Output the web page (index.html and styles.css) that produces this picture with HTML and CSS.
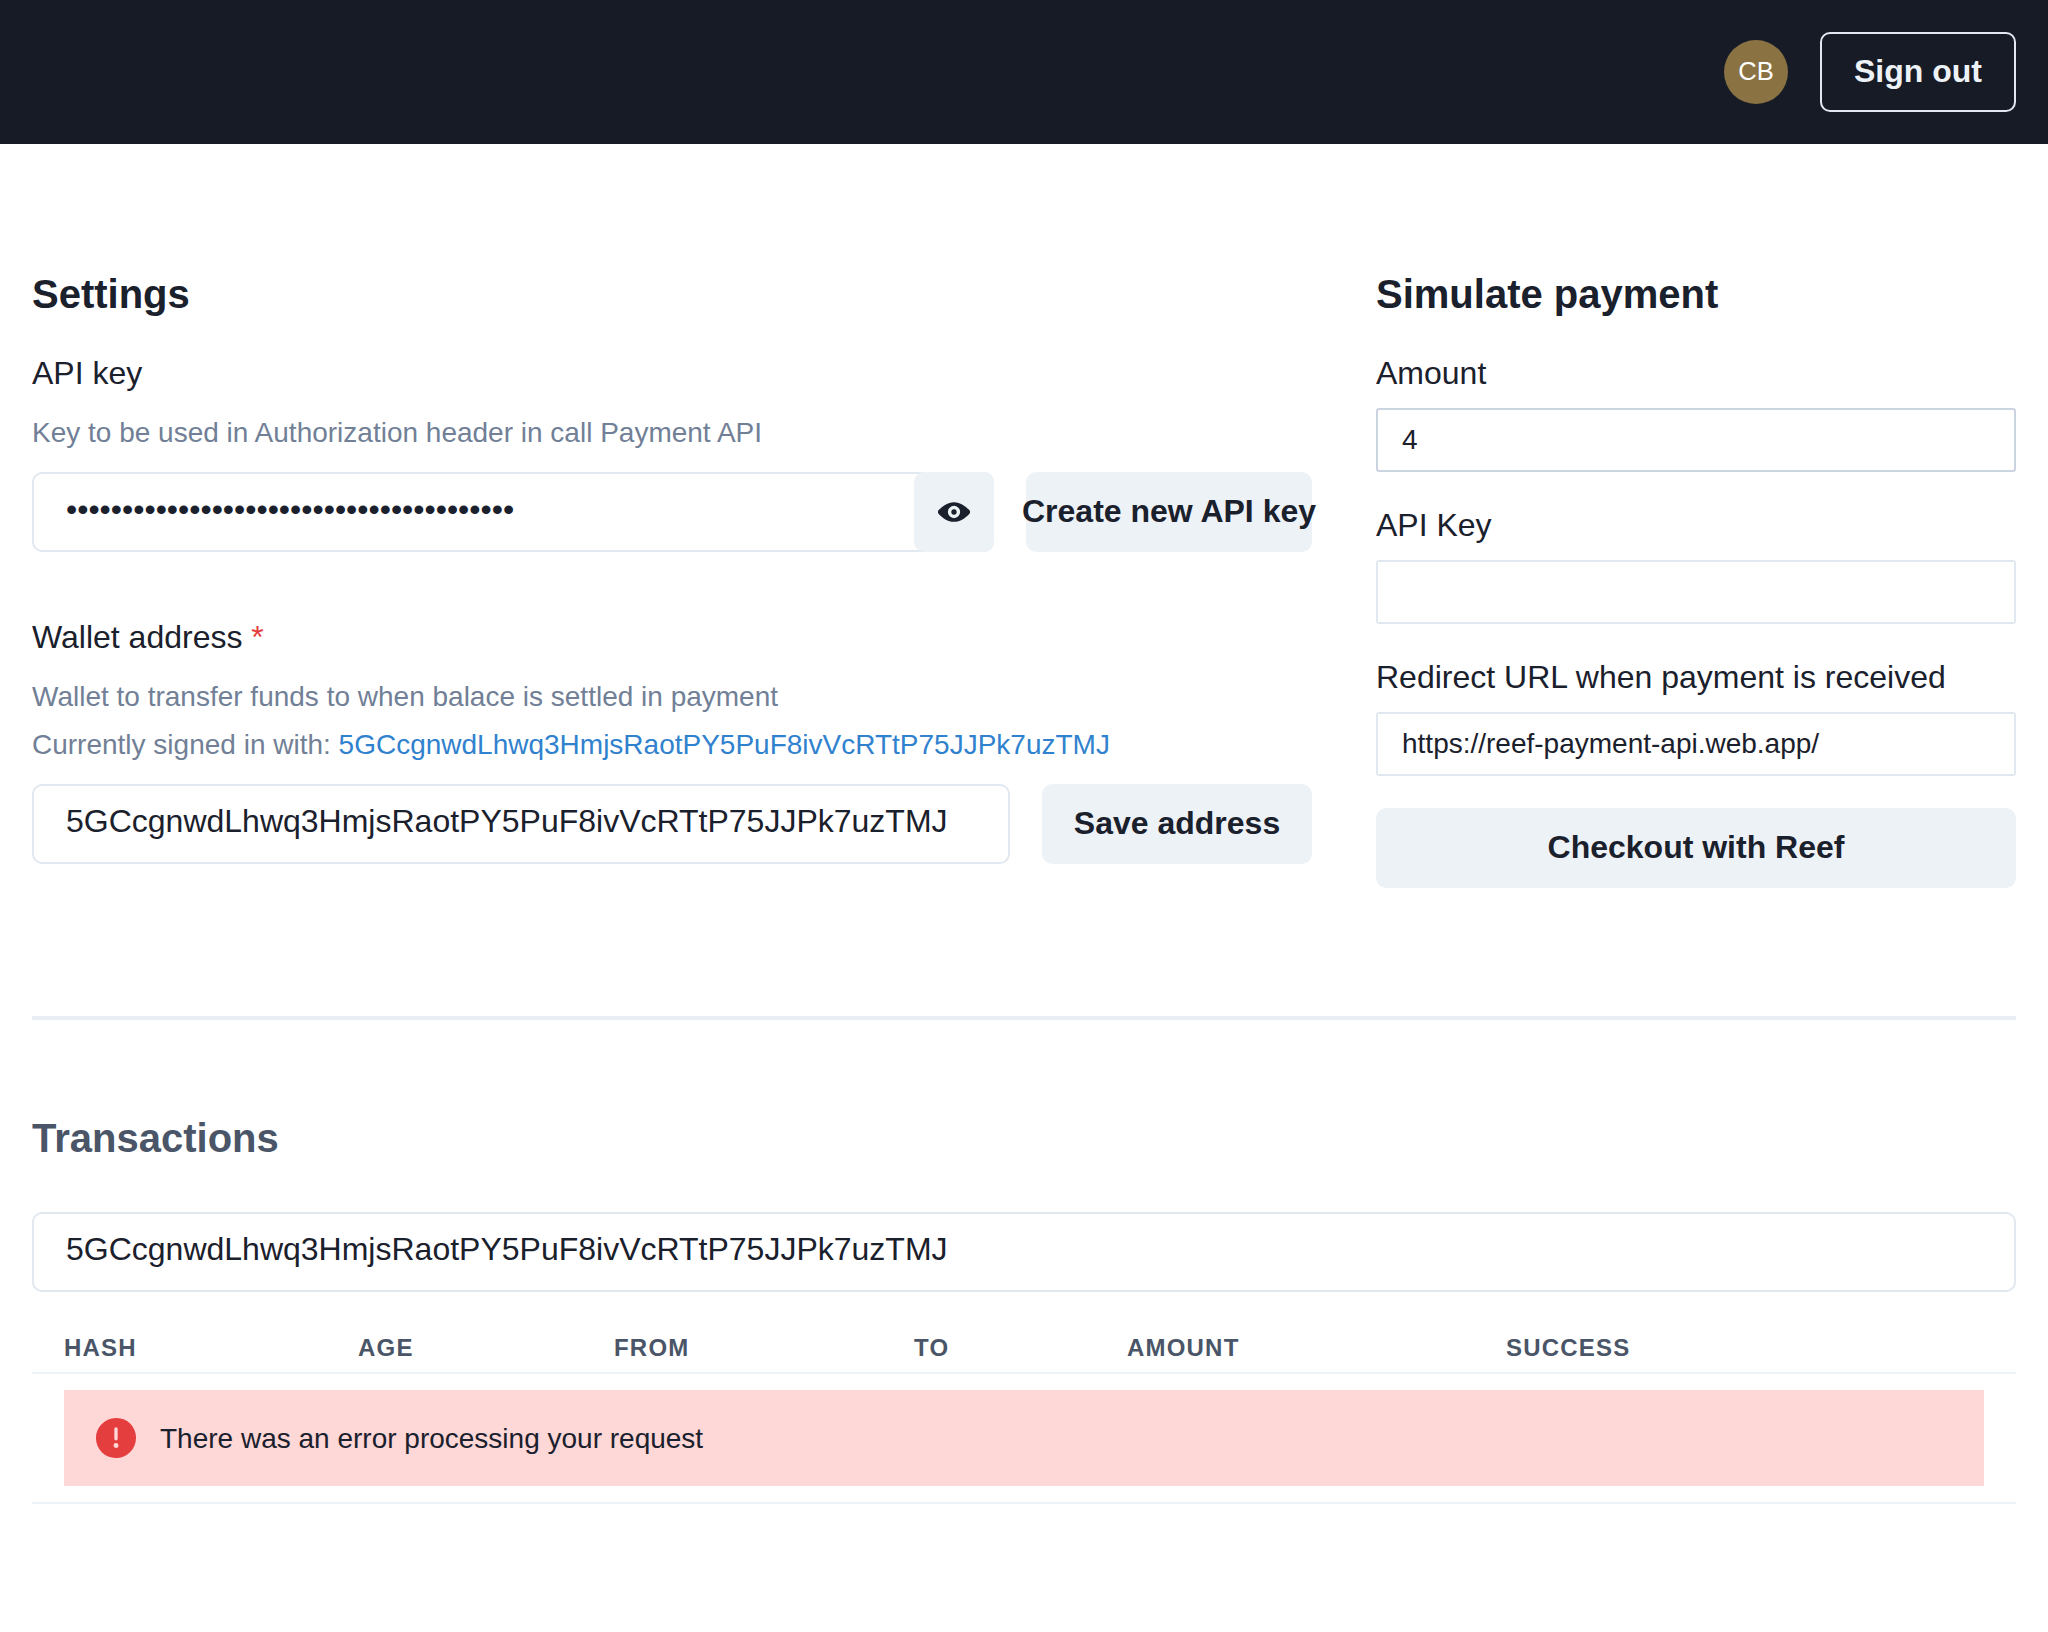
FILE: index.html
```html
<!doctype html>
<html>
<head>
<meta charset="utf-8">
<title>Settings</title>
<link rel="stylesheet" href="styles.css">
</head>

<body>
	<header class="topbar">
		<div class="avatar">CB</div>
		<button class="btn-outline">Sign out</button>
	</header>

	<main class="content">
		<div class="columns">
			<section class="settings">
				<h2>Settings</h2>
				<label class="field-label">API key</label>
				<p class="help">Key to be used in Authorization header in call Payment API</p>
				<div class="row">
					<div class="input-group">
						<input class="input-lg" type="password" value="0123456789012345678901234567890123456789">
						<button class="eye-btn" aria-label="Show">
							<svg viewBox="0 0 24 24" width="32" height="32"><path fill="#1a202c" d="M23.432,10.524C20.787,7.614,16.4,4.538,12,4.6,7.6,4.537,3.213,7.615.568,10.524a2.211,2.211,0,0,0,0,2.948C3.182,16.351,7.507,19.4,11.839,19.4h.308c4.347,0,8.671-3.049,11.288-5.929A2.21,2.21,0,0,0,23.432,10.524ZM7.4,12A4.6,4.6,0,1,1,12,16.6,4.6,4.6,0,0,1,7.4,12Z"/><circle fill="#1a202c" cx="12" cy="12" r="2"/></svg>
						</button>
					</div>
					<button class="btn btn-create">Create new API key</button>
				</div>

				<label class="field-label wallet-label">Wallet address <span class="req">*</span></label>
				<p class="help">Wallet to transfer funds to when balace is settled in payment</p>
				<p class="help help-2">Currently signed in with: <a href="#">5GCcgnwdLhwq3HmjsRaotPY5PuF8ivVcRTtP75JJPk7uzTMJ</a></p>
				<div class="row row-wallet">
					<input class="input-lg wallet-input" type="text" value="5GCcgnwdLhwq3HmjsRaotPY5PuF8ivVcRTtP75JJPk7uzTMJ">
					<button class="btn btn-save">Save address</button>
				</div>
			</section>

			<section class="simulate">
				<h2>Simulate payment</h2>
				<label class="field-label">Amount</label>
				<input class="input-md input-active" type="text" value="4">
				<label class="field-label">API Key</label>
				<input class="input-md" type="text">
				<label class="field-label">Redirect URL when payment is received</label>
				<input class="input-md" type="text" value="https://reef-payment-api.web.app/">
				<button class="btn btn-checkout">Checkout with Reef</button>
			</section>
		</div>

		<hr class="divider">

		<h2 class="tx-title">Transactions</h2>
		<input class="input-lg tx-input" type="text" value="5GCcgnwdLhwq3HmjsRaotPY5PuF8ivVcRTtP75JJPk7uzTMJ">

		<table class="tx-table">
			<thead>
				<tr>
					<th class="col-hash">Hash</th>
					<th class="col-age">Age</th>
					<th class="col-from">From</th>
					<th class="col-to">To</th>
					<th class="col-amount">Amount</th>
					<th>Success</th>
				</tr>
			</thead>
			<tbody>
				<tr>
					<td colspan="6">
						<div class="alert">
							<svg viewBox="0 0 24 24" width="40" height="40"><path fill="#e53e3e" d="M11.983,0a12.206,12.206,0,0,0-8.51,3.653A11.8,11.8,0,0,0,0,12.207,11.779,11.779,0,0,0,11.8,24h.214A12.111,12.111,0,0,0,24,11.791h0A11.766,11.766,0,0,0,11.983,0ZM10.5,16.542a1.476,1.476,0,0,1,1.449-1.53h.027a1.527,1.527,0,0,1,1.523,1.47,1.475,1.475,0,0,1-1.449,1.53h-.027A1.529,1.529,0,0,1,10.5,16.542ZM11,12.5v-6a1,1,0,0,1,2,0v6a1,1,0,1,1-2,0Z"/></svg>
							<span class="alert-text">There was an error processing your request</span>
						</div>
					</td>
				</tr>
			</tbody>
		</table>
	</main>
</body>
</html>
```
FILE: styles.css
```css
*{margin:0; padding:0; box-sizing:border-box;}
html,body{height:100%;}
body{background:#fff; color:#1a202c; font-family:"Liberation Sans",Arial,sans-serif; font-size:32px;}
button{font-family:inherit; cursor:pointer; border:0;}
input{font-family:inherit; color:#1a202c; background:#fff; outline:none;}

.topbar{height:144px; background:#171b26; display:flex; align-items:center; justify-content:flex-end; padding:0 32px; gap:32px;}
.avatar{width:64px; height:64px; border-radius:50%; background:#8a7243; color:#fff; font-size:25.6px; padding-bottom:2px; display:flex; align-items:center; justify-content:center;}
.btn-outline{height:80px; width:196px; padding-bottom:1px; background:transparent; color:#edf2f7; font-size:32px; font-weight:700; border:2px solid #e2e8f0; border-radius:10px;}

.content{padding:128px 32px 0;}
.columns{display:flex; gap:64px;}
.settings{width:1280px;}
.simulate{flex:1; display:flex; flex-direction:column;}

h2{font-size:40px; line-height:44px; font-weight:700;}
.field-label{display:block; margin-top:37px; font-size:32px; line-height:40px;}
.wallet-label{margin-top:65px;}
.req{color:#e53e3e;}
.help{margin-top:20px; color:#718096; font-size:28px; line-height:40px;}
.help-2{margin-top:8px;}
.help a{color:#3182ce; text-decoration:none;}

.row{display:flex; gap:32px; margin-top:19px;}
.input-group{flex:1; display:flex; position:relative;}
.input-lg{height:80px; width:100%; padding:0 32px 5px; font-size:32px; border:2px solid #e2e8f0; border-radius:10px;}
.input-group .input-lg{padding-right:100px;}
.eye-btn{position:absolute; right:0; top:0; width:80px; height:80px; background:#edf2f7; border-radius:10px; display:flex; align-items:center; justify-content:center;}
.btn{background:#edf2f7; color:#1a202c; font-size:32px; font-weight:700; border-radius:10px; height:80px; padding-bottom:2px; white-space:nowrap;}
.btn-create{width:286px; flex:none; display:flex; align-items:center; justify-content:center;}
.btn-save{width:270px; flex:none;}
.wallet-input{flex:1; width:auto; min-width:0;}

.input-md{height:64px; width:100%; margin-top:15px; padding:0 24px; font-size:28px; border:2px solid #e2e8f0; border-radius:3px;}
.input-active{border-color:#cbd5e0;}
.simulate .input-md + .field-label{margin-top:33px;}
.btn-checkout{margin-top:32px; width:100%;}

.divider{margin-top:128px; border:0; border-top:4px solid #e9edf4;}

.tx-title{margin-top:96px; color:#4a5568;}
.tx-input{margin-top:52px; display:block;}

.tx-table{width:100%; margin-top:36px; border-collapse:collapse; table-layout:fixed;}
.tx-table th{padding:0 0 4px 32px; height:45px; text-align:left; color:#4a5568; font-size:24px; line-height:40px; font-weight:700; letter-spacing:1.2px; text-transform:uppercase; border-bottom:2px solid #edf2f7;}
.col-hash{width:294px;}
.col-age{width:256px;}
.col-from{width:300px;}
.col-to{width:213px;}
.col-amount{width:379px;}
.tx-table td{padding:16px 32px; border-bottom:2px solid #edf2f7;}
.alert{height:96px; background:#fed7d7; display:flex; align-items:center; gap:24px; padding:0 32px; font-size:28px;}
.alert svg{flex:none;}
.alert-text{margin-top:2px;}
```
